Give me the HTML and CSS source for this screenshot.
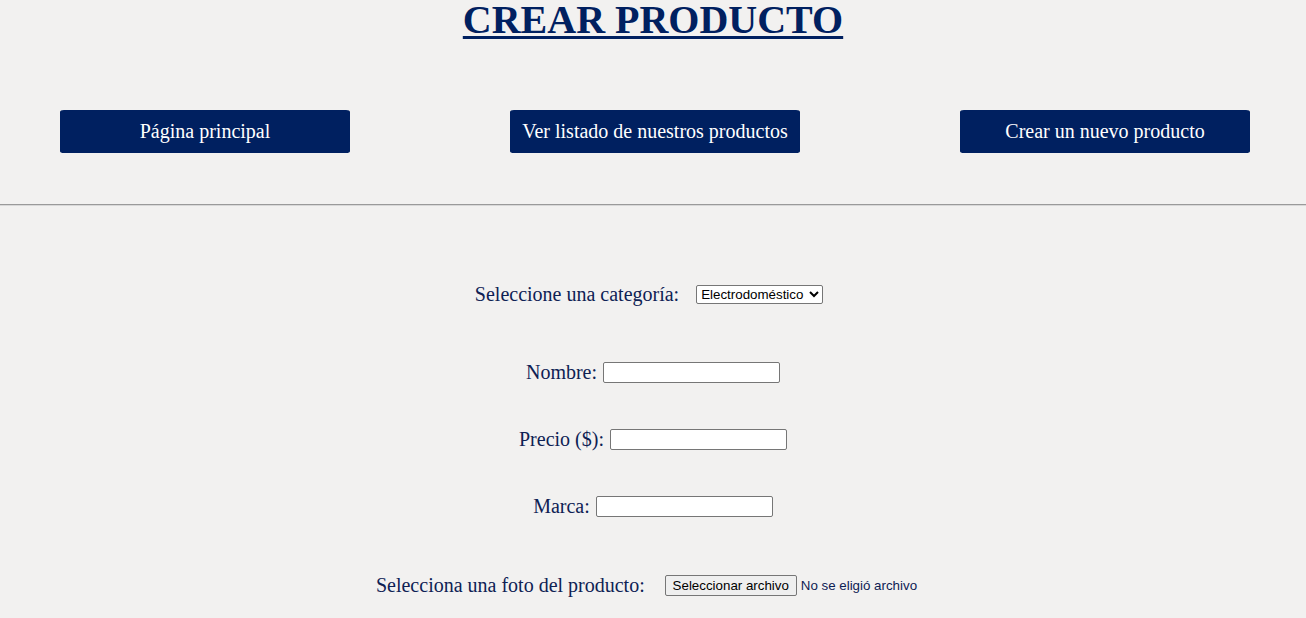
FILE: index.html
```html
<!DOCTYPE html>
<html lang="es">
<head>
<meta charset="utf-8">
<title>Crear producto</title>
<link rel="stylesheet" href="styles.css">
</head>
<body>
<header class="header">
  <h1 class="title">CREAR PRODUCTO</h1>
  <nav class="nav">
    <a class="nav-btn" href="#">Página principal</a>
    <a class="nav-btn" href="#">Ver listado de nuestros productos</a>
    <a class="nav-btn" href="#">Crear un nuevo producto</a>
  </nav>
</header>
<hr class="divider">
<form class="form">
  <div class="row row-first">
    <label class="label label-wide" for="cat">Seleccione una categoría:</label>
    <select id="cat" class="select">
      <option>Electrodoméstico</option>
    </select>
  </div>
  <div class="row">
    <label class="label" for="nombre">Nombre:</label>
    <input id="nombre" class="text-input" type="text">
  </div>
  <div class="row">
    <label class="label" for="precio">Precio ($):</label>
    <input id="precio" class="text-input" type="text">
  </div>
  <div class="row">
    <label class="label" for="marca">Marca:</label>
    <input id="marca" class="text-input" type="text">
  </div>
  <div class="row row-last">
    <span class="label label-file">Selecciona una foto del producto:</span>
    <label class="file-picker" for="foto">
      <input id="foto" class="file-input" type="file">
      <span class="file-btn">Seleccionar archivo</span>
      <span class="file-status">No se eligió archivo</span>
    </label>
  </div>
</form>
</body>
</html>
```

FILE: styles.css
```css
html, body {
  margin: 0;
  padding: 0;
}
body {
  background: #f2f1f0;
  font-family: "Liberation Serif", "Times New Roman", serif;
  color: #002060;
}
.header {
  display: flex;
  flex-direction: column;
  padding-top: 1px;
}
.title {
  margin: 0;
  font-size: 40px;
  line-height: 38px;
  font-weight: bold;
  text-align: center;
  text-decoration: underline;
  text-decoration-thickness: 3px;
  text-underline-offset: 3px;
  color: #002060;
}
.nav {
  display: grid;
  grid-template-columns: repeat(3, 290px);
  column-gap: 160px;
  padding-left: 60px;
  margin-top: 71px;
  margin-bottom: 51px;
}
.nav-btn {
  display: flex;
  align-items: center;
  justify-content: center;
  height: 43px;
  background: #002060;
  color: #ffffff;
  font-size: 20px;
  text-decoration: none;
  border-radius: 4px / 2px;
}
.divider {
  margin: 0;
  border: 0;
  border-top: 1px solid #9a9a9a;
  border-bottom: 1px solid #d8d8d8;
  height: 0;
}
.form {
  display: flex;
  flex-direction: column;
  align-items: center;
  gap: 44px;
  padding-top: 77px;
}
.row {
  display: flex;
  align-items: center;
  height: 23px;
}
.row-first {
  margin-bottom: 11px;
  padding-right: 8px;
}
.row-last {
  margin-top: 12px;
  padding-right: 13px;
}
.label {
  font-size: 20px;
  line-height: 23px;
  margin-right: 6px;
  color: #0e2154;
}
.label-wide {
  margin-right: 17px;
}
.label-file {
  margin-right: 20px;
}
.select {
  font-family: "Liberation Sans", Arial, sans-serif;
  font-size: 13.33px;
  width: 127px;
  height: 19px;
  padding: 0;
  color: #000;
  background: #fff;
  border: 1px solid #767676;
  border-radius: 2px;
}
.text-input {
  width: 177px;
  height: 21px;
  box-sizing: border-box;
  border: 1px solid #767676;
  border-radius: 2px;
  background: #fff;
  padding: 1px 2px;
}
.file-picker {
  display: flex;
  align-items: center;
  font-family: "Liberation Sans", Arial, sans-serif;
  font-size: 13.33px;
  cursor: pointer;
}
.file-input {
  display: none;
}
.file-btn {
  display: flex;
  align-items: center;
  justify-content: center;
  width: 132px;
  height: 21px;
  box-sizing: border-box;
  background: #efefef;
  color: #000;
  border: 1px solid #767676;
  border-radius: 2px;
}
.file-status {
  margin-left: 4px;
  color: #0e2154;
}
```
